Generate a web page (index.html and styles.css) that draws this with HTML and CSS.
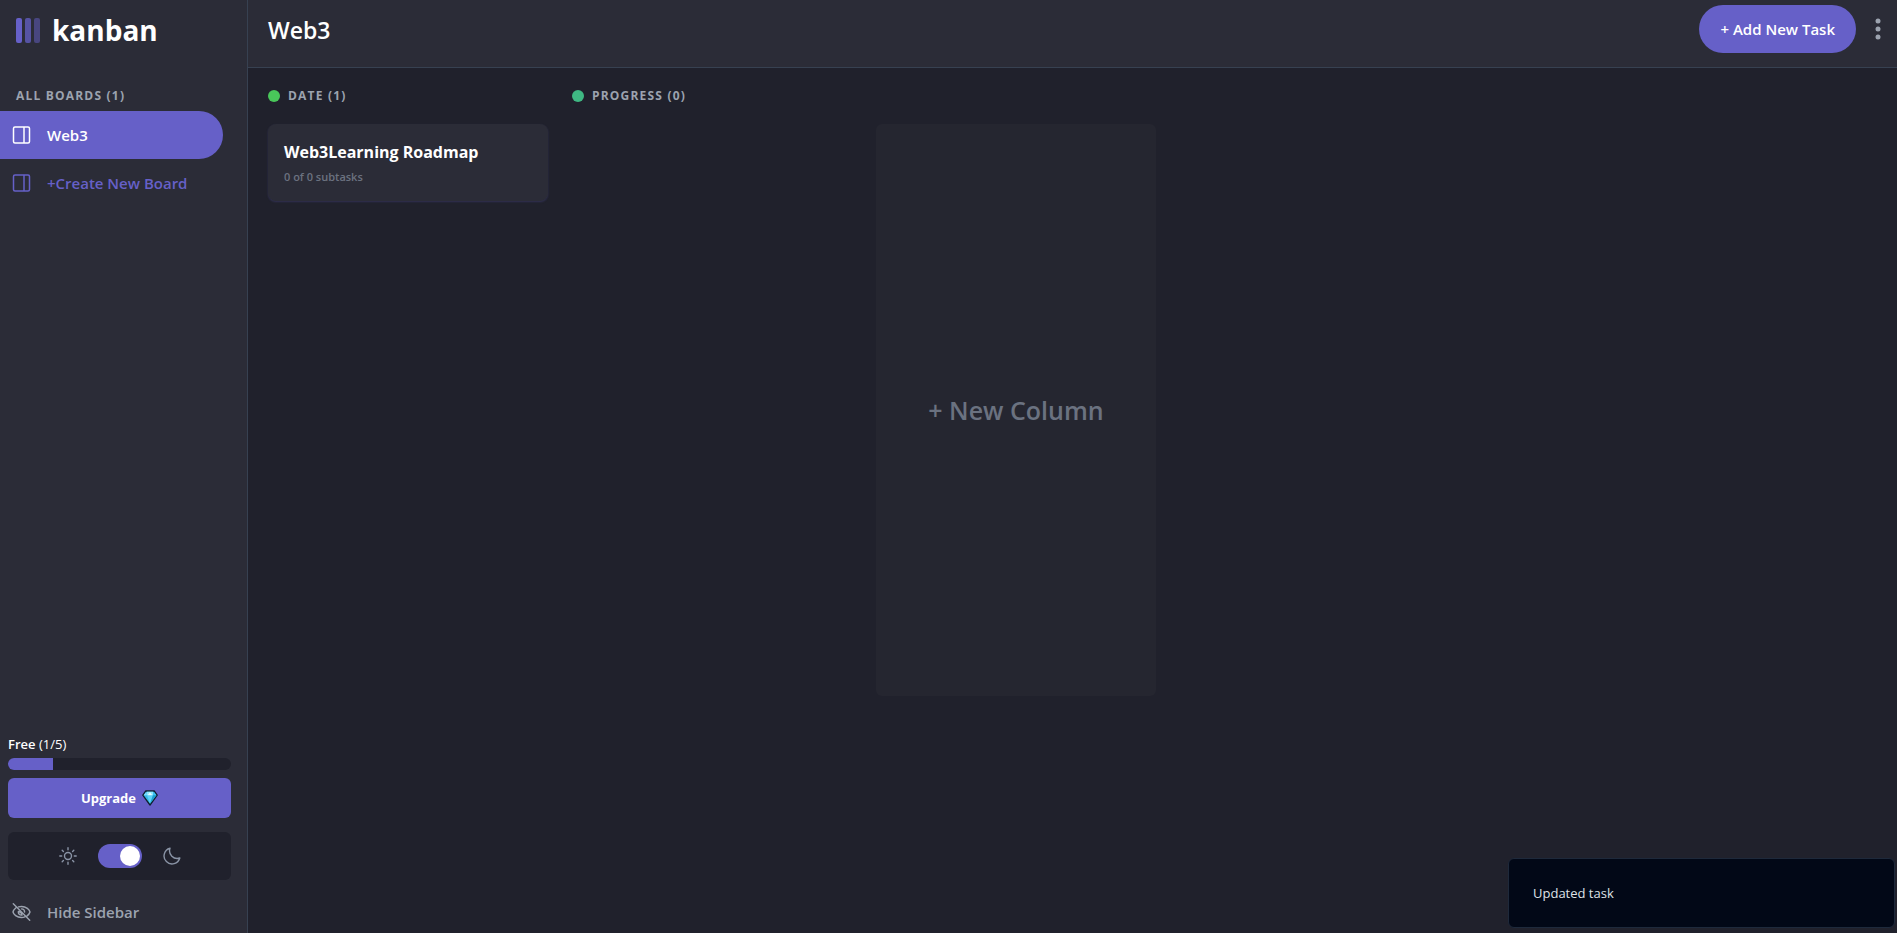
FILE: index.html
```html
<!DOCTYPE html>
<html lang="en">
<head>
<meta charset="utf-8">
<meta name="viewport" content="width=device-width, initial-scale=1">
<title>Kanban</title>
<link rel="stylesheet" href="styles.css">
</head>
<body>
<div class="app">
  <aside class="sidebar">
    <div class="brand">
      <svg class="brand-mark" width="24" height="25" viewBox="0 0 24 25" fill="#6660c8" aria-hidden="true">
        <rect width="6" height="25" rx="2"/>
        <rect x="9" width="6" height="25" rx="2" opacity=".75"/>
        <rect x="18" width="6" height="25" rx="2" opacity=".5"/>
      </svg>
      <span class="brand-name">kanban</span>
    </div>
    <h2 class="label boards-label">ALL BOARDS (1)</h2>
    <nav class="boards">
      <a class="nav-item nav-item-active" href="#web3">
        <svg class="icon" viewBox="0 0 18 18" fill="none" stroke="currentColor" stroke-width="1.5" aria-hidden="true"><rect x="1" y="1" width="16" height="16" rx="1.5"/><path d="M11.500 1v16"/></svg>
        <span>Web3</span>
      </a>
      <button class="nav-item nav-item-create" type="button">
        <svg class="icon" viewBox="0 0 18 18" fill="none" stroke="currentColor" stroke-width="1.5" aria-hidden="true"><rect x="1" y="1" width="16" height="16" rx="1.5"/><path d="M11.500 1v16"/></svg>
        <span>+Create New Board</span>
      </button>
    </nav>
    <div class="sidebar-foot">
      <div class="plan"><strong>Free</strong> (1/5)</div>
      <div class="meter" role="progressbar" aria-label="Boards used" aria-valuemin="0" aria-valuemax="5" aria-valuenow="1"><div class="meter-fill" style="width:20%"></div></div>
      <button class="upgrade" type="button">Upgrade
        <svg width="16" height="16" viewBox="0 0 16 16" aria-hidden="true">
          <path d="M3.800 1h8.400l3 4.200L8 15 .8 5.200z" fill="#35b8e8" stroke="#10202e" stroke-width="1.300" stroke-linejoin="round"/>
          <path d="M4.300 1.700 5 5.200H1.600z" fill="#7fdcfa"/>
          <path d="M5 1.700h6L11 5.200H5z" fill="#8be9ff"/>
          <path d="M5 5.200h6L8 13.500z" fill="#5cd3f7"/>
          <path d="m11.700 1.700 2.700 3.500H11z" fill="#3fc4f0"/>
          <path d="M11 5.200h3.400L8 13.800z" fill="#1f9fd0"/>
          <path d="m8 2.200 2.400 3H5.600z" fill="#e4faff"/>
        </svg>
      </button>
      <div class="theme">
        <svg class="theme-icon" viewBox="0 0 18 18" fill="none" stroke="currentColor" stroke-width="1.400" stroke-linecap="round" aria-hidden="true"><circle cx="9" cy="9" r="3.500"/><path d="M9 .8v1.900M9 15.300v1.900M.8 9h1.900M15.300 9h1.900M3.200 3.200l1.200 1.200M13.600 13.600l1.200 1.200M3.200 14.800l1.200-1.200M13.600 4.400l1.200-1.200"/></svg>
        <input class="switch" type="checkbox" role="switch" aria-label="Dark mode" checked>
        <svg class="theme-icon" viewBox="0 0 18 18" fill="none" stroke="currentColor" stroke-width="1.400" stroke-linejoin="round" aria-hidden="true"><path d="M7 1.200A8 8 0 1 0 16.800 11 7.700 7.700 0 0 1 7 1.200z"/></svg>
      </div>
      <button class="nav-item nav-item-hide" type="button">
        <svg class="icon" viewBox="0 0 18 18" fill="none" stroke="currentColor" stroke-width="1.400" stroke-linecap="round" stroke-linejoin="round" aria-hidden="true"><path d="M.8.800l16.400 16.400M3.200 5C1.700 6.300.7 8 .5 9c.5 2.200 3.700 5.500 8.500 5.500 1.200 0 2.300-.2 3.300-.6M6 3.900C7 3.600 8 3.500 9 3.500c4.800 0 8 3.300 8.500 5.500-.3 1.100-1.300 2.700-2.900 3.900M9 5.900A3.100 3.100 0 0 1 12.100 9M5.900 8.500A3.100 3.100 0 0 0 9.500 12.100L9 10.400 7.500 9z"/></svg>
        <span>Hide Sidebar</span>
      </button>
    </div>
  </aside>
  <div class="workspace">
    <header class="topbar">
      <h1 class="title">Web3</h1>
      <button class="add-task" type="button">+ Add New Task</button>
      <button class="more" type="button" aria-label="Board options">
        <svg width="6" height="22" viewBox="0 0 6 22" fill="currentColor" aria-hidden="true"><circle cx="3" cy="3" r="2.500"/><circle cx="3" cy="11" r="2.500"/><circle cx="3" cy="19" r="2.500"/></svg>
      </button>
    </header>
    <main class="board">
      <section class="column">
        <h2 class="label column-label"><span class="dot dot-date"></span>DATE (1)</h2>
        <article class="card">
          <h3 class="card-title">Web3Learning Roadmap</h3>
          <p class="card-meta">0 of 0 subtasks</p>
        </article>
      </section>
      <section class="column">
        <h2 class="label column-label"><span class="dot dot-progress"></span>PROGRESS (0)</h2>
      </section>
      <button class="new-column" type="button">+ New Column</button>
    </main>
  </div>
</div>
<div class="toast" role="status">Updated task</div>
</body>
</html>
```
FILE: styles.css
```css
:root {
  --panel: #2b2c37;
  --ground: #20212c;
  --accent: #6660c8;
  --muted: #9ca3af;
  --dim: #6b7280;
  --line: #374151;
}

* {
  box-sizing: border-box;
}

body {
  margin: 0;
  background: var(--ground);
  color: #fff;
  font: 15px/24px "Segoe UI", "Open Sans", "Noto Sans", sans-serif;
}

h1, h2, h3, p {
  margin: 0;
}

button {
  border: 0;
  padding: 0;
  background: none;
  color: inherit;
  font: inherit;
  cursor: pointer;
}

.app {
  display: flex;
  min-height: 100vh;
}

.sidebar {
  display: flex;
  flex-direction: column;
  flex: 0 0 248px;
  border-right: 1px solid var(--line);
  background: var(--panel);
}

.brand {
  display: flex;
  align-items: center;
  gap: 12px;
  padding: 11px 16px;
}

.brand-name {
  font-size: 28px;
  font-weight: 700;
  line-height: 38px;
}

.label {
  color: var(--muted);
  font-size: 12px;
  font-weight: 700;
  line-height: 16px;
  letter-spacing: 0.1em;
}

.boards-label {
  padding: 28px 16px 7px;
}

.nav-item {
  display: flex;
  align-items: center;
  gap: 16px;
  width: 223px;
  height: 48px;
  padding-left: 12px;
  border-radius: 0 24px 24px 0;
  color: #fff;
  font-weight: 600;
  text-decoration: none;
}

.nav-item-active {
  background: var(--accent);
}

.nav-item-create {
  color: var(--accent);
}

.nav-item-hide {
  height: 42px;
  color: var(--muted);
}

.icon {
  width: 19px;
  height: 18px;
}

.sidebar-foot {
  margin-top: auto;
}

.plan {
  padding: 0 8px 4px;
  font-size: 13px;
  line-height: 20px;
}

.plan strong {
  font-weight: 600;
}

.meter {
  height: 12px;
  margin: 0 16px 8px 8px;
  overflow: hidden;
  border-radius: 6px;
  background: var(--ground);
}

.meter-fill {
  height: 100%;
  background: var(--accent);
}

.upgrade {
  display: flex;
  align-items: center;
  justify-content: center;
  gap: 6px;
  width: 223px;
  height: 40px;
  margin: 0 8px 14px;
  border-radius: 6px;
  background: var(--accent);
  font-size: 13px;
  font-weight: 700;
}

.theme {
  display: flex;
  align-items: center;
  justify-content: center;
  gap: 21px;
  height: 48px;
  margin: 0 16px 11px 8px;
  border-radius: 6px;
  background: var(--ground);
  color: #8a94a6;
}

.theme-icon {
  width: 18px;
  height: 18px;
}

.switch {
  appearance: none;
  display: flex;
  align-items: center;
  width: 44px;
  height: 24px;
  margin: 0;
  padding: 2px;
  border-radius: 12px;
  background: var(--accent);
}

.switch::before {
  content: "";
  width: 20px;
  height: 20px;
  border-radius: 50%;
  background: #fff;
}

.switch:checked::before {
  margin-left: auto;
}

.workspace {
  display: flex;
  flex: 1;
  flex-direction: column;
  min-width: 0;
}

.topbar {
  display: flex;
  align-items: center;
  padding: 5px 8px 14px 20px;
  border-bottom: 1px solid var(--line);
  background: var(--panel);
}

.title {
  margin-right: auto;
  padding-top: 2px;
  font-size: 23px;
  font-weight: 600;
  line-height: 32px;
}

.add-task {
  height: 48px;
  padding: 0 21px;
  border-radius: 24px;
  background: var(--accent);
  font-weight: 600;
}

.more {
  display: flex;
  justify-content: center;
  width: 22px;
  margin-left: 11px;
  color: var(--muted);
}

.board {
  display: flex;
  flex: 1;
  gap: 24px;
  padding: 20px;
}

.column {
  flex: 0 0 280px;
}

.column-label {
  display: flex;
  align-items: center;
  gap: 8px;
  margin-bottom: 20px;
}

.dot {
  width: 12px;
  height: 12px;
  border-radius: 50%;
}

.dot-date {
  background: #49c75a;
}

.dot-progress {
  background: #3fb883;
}

.card {
  padding: 16px;
  border-radius: 8px;
  background: var(--panel);
  box-shadow: 0 1px 2px rgba(99, 95, 199, 0.25);
}

.card-title {
  font-size: 16px;
  font-weight: 700;
  line-height: 24px;
}

.card-meta {
  padding-top: 5px;
  color: var(--dim);
  font-size: 11px;
  font-weight: 600;
  line-height: 16px;
}

.new-column {
  flex: 0 0 280px;
  height: calc(66vh - 44px);
  margin-top: 36px;
  border-radius: 6px;
  background: #252630;
  color: var(--dim);
  font-size: 25px;
  font-weight: 600;
}

.toast {
  position: fixed;
  right: 2px;
  bottom: 5px;
  width: 387px;
  padding: 24px;
  border: 1px solid #1e293b;
  border-radius: 6px;
  background: #020817;
  color: #dfe3e8;
  font-size: 13px;
  line-height: 20px;
}
```
